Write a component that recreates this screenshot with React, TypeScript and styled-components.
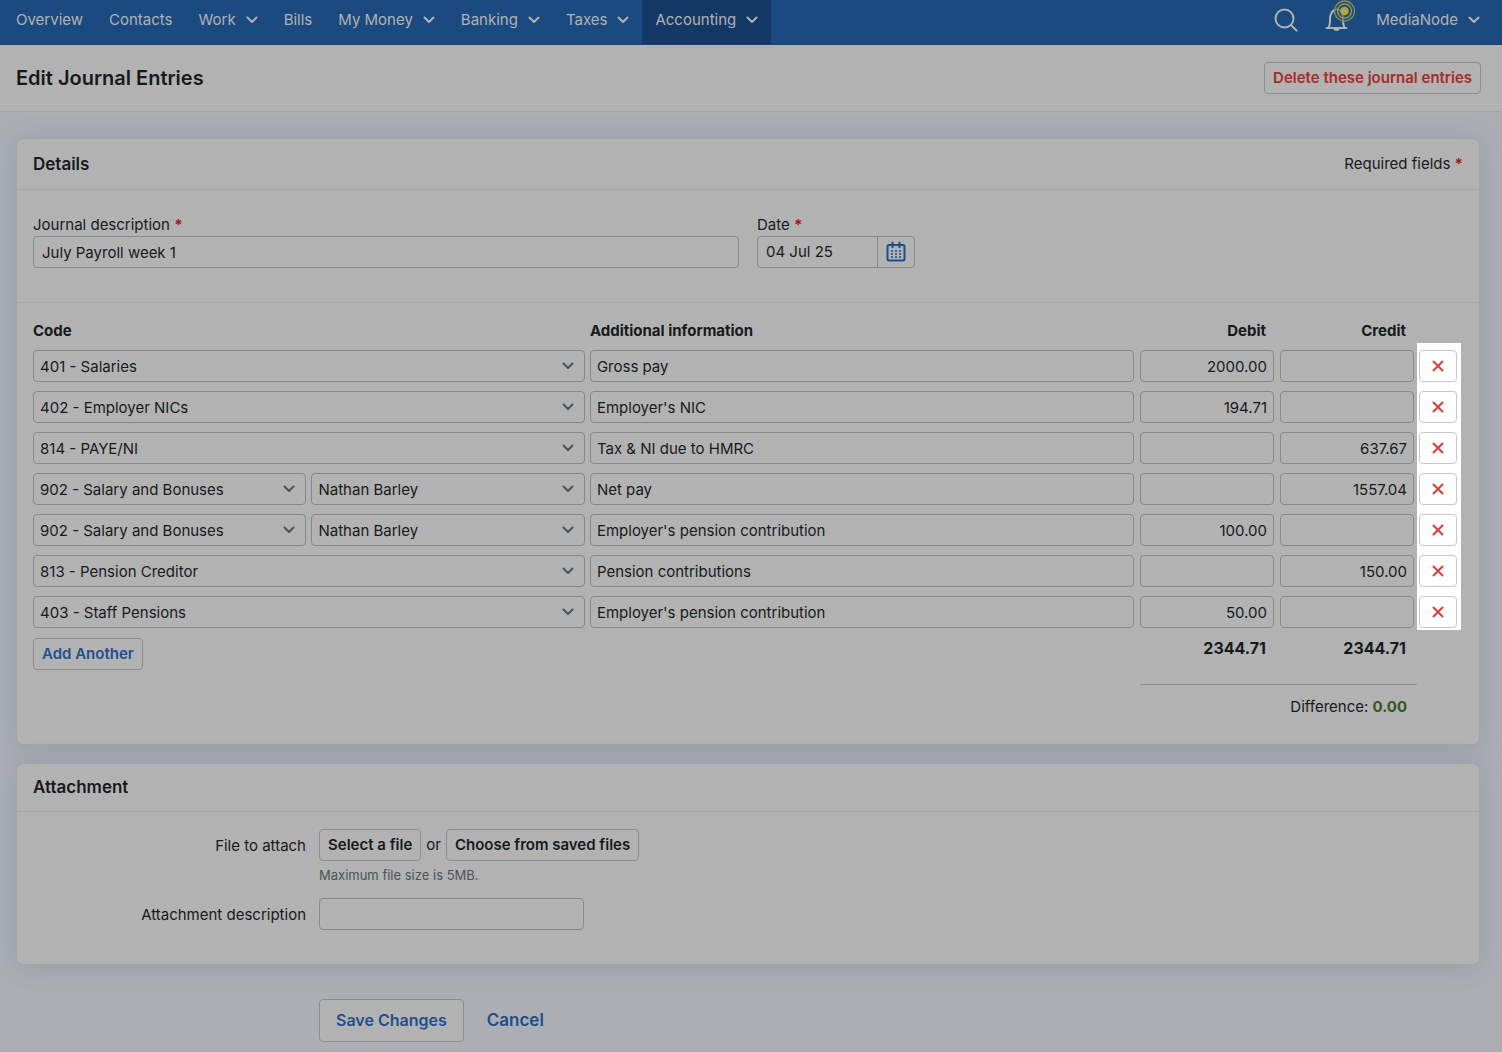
import React from 'react';
import styled, { createGlobalStyle } from 'styled-components';

const c = {
  nav: '#1b4a81',
  navActive: '#143966',
  navText: '#b2b2b2',
  page: '#abaeb3',
  card: '#b2b2b2',
  line: '#a5a6a8',
  field: '#85898d',
  button: '#898e93',
  text: '#171a1c',
  muted: '#4b5459',
  blue: '#1f4f8c',
  red: '#a72b29',
  required: '#9a1c1c',
  bright: '#dc3d35',
  green: '#31591f',
};

const GlobalStyle = createGlobalStyle`
  *, *::before, *::after { box-sizing: border-box; }
  body {
    margin: 0;
    background: ${c.page};
    color: ${c.text};
    font: 400 15px/20px Inter, "Liberation Sans", sans-serif;
  }
  button, input, select { font: inherit; color: inherit; margin: 0; }
  button { cursor: pointer; }
`;

const TopBar = styled.header`
  display: flex;
  justify-content: space-between;
  height: 45px;
  padding: 0 9px 0 3px;
  background: ${c.nav};
  border-bottom: 1px solid #1a4274;
`;

const NavGroup = styled.nav`
  display: flex;
`;

const NavLink = styled.a<{ $active?: boolean }>`
  display: flex;
  align-items: center;
  gap: 10px;
  padding: 0 13px 4px;
  color: ${c.navText};
  background: ${(p) => (p.$active ? c.navActive : 'transparent')};
  text-decoration: none;
  white-space: nowrap;
`;

const Tools = styled.div`
  display: flex;
  align-items: center;
`;

const IconButton = styled.button`
  display: flex;
  padding: 0 7px 4px 19px;
  border: 0;
  background: none;
  color: ${c.navText};
`;

const PageHead = styled.div`
  display: flex;
  align-items: center;
  justify-content: space-between;
  height: 67px;
  padding: 0 21px 0 16px;
  background: ${c.card};
  border-bottom: 1px solid #a0a2a5;
`;

const PageTitle = styled.h1`
  margin: 0;
  font-size: 20px;
  line-height: 24px;
  font-weight: 600;
`;

const Button = styled.button<{ $tone?: string; $large?: boolean }>`
  height: ${(p) => (p.$large ? 43 : 32)}px;
  padding: 0 ${(p) => (p.$large ? 16 : 8)}px;
  border: 1px solid ${c.button};
  border-radius: 4px;
  background: ${c.card};
  color: ${(p) => p.$tone || c.text};
  font-size: ${(p) => (p.$large ? 16 : 15)}px;
  font-weight: 600;
  white-space: nowrap;
`;

const Main = styled.main`
  display: flex;
  flex-direction: column;
  gap: 18px;
  padding: 26px 22px 11px 16px;
`;

const Card = styled.section`
  border: 1px solid ${c.line};
  border-radius: 8px;
  background: ${c.card};
  box-shadow: 0 2px 26px rgba(80, 92, 130, 0.22);
`;

const CardHead = styled.div<{ $compact?: boolean }>`
  display: flex;
  align-items: center;
  justify-content: space-between;
  height: ${(p) => (p.$compact ? 48 : 51)}px;
  padding: 0 16px;
  border-bottom: 1px solid ${c.line};
`;

const CardTitle = styled.h2`
  margin: 0;
  font-size: 17px;
  line-height: 24px;
  font-weight: 600;
`;

const Star = styled.span`
  color: ${c.required};
  font-weight: 700;
`;

const DetailFields = styled.div`
  display: grid;
  grid-template-columns: 1fr 1fr;
  gap: 18px;
  padding: 25px 16px 34px;
  border-bottom: 1px solid ${c.line};
`;

const Field = styled.div`
  display: flex;
  flex-direction: column;
  gap: 1px;
`;

const TextInput = styled.input<{ $right?: boolean; $roomy?: boolean }>`
  display: block;
  width: 100%;
  height: 32px;
  padding: 0 ${(p) => (p.$roomy ? 8 : 6)}px;
  border: 1px solid ${c.field};
  border-radius: 4px;
  background: transparent;
  text-align: ${(p) => (p.$right ? 'right' : 'left')};
`;

const DateGroup = styled.div`
  display: flex;
  width: 158px;
  height: 32px;
  border: 1px solid ${c.field};
  border-radius: 4px;
`;

const DateInput = styled.input`
  flex: 1;
  min-width: 0;
  padding: 0 8px;
  border: 0;
  background: none;
`;

const DateButton = styled.button`
  display: flex;
  align-items: center;
  justify-content: center;
  width: 37px;
  padding: 0;
  border: 0;
  border-left: 1px solid ${c.field};
  background: none;
  color: ${c.blue};
`;

const TableWrap = styled.div`
  padding: 0 18px 27px 16px;
`;

const Table = styled.table`
  width: 100%;
  table-layout: fixed;
  border-collapse: collapse;
`;

const Col = styled.col<{ $width?: string }>`
  width: ${(p) => p.$width || 'auto'};
`;

const Th = styled.th<{ $edge?: number }>`
  padding: 18px ${(p) => p.$edge ?? 5}px 2px 0;
  font-weight: 700;
  text-align: ${(p) => (p.$edge ? 'right' : 'left')};
`;

const Td = styled.td<{ $gap?: number }>`
  padding: 7px ${(p) => p.$gap ?? 6}px 2px 0;
`;

const RemoveCell = styled.td`
  padding: 7px 4px 2px 2px;
  background: #ffffff;
`;

const RemoveButton = styled.button`
  display: flex;
  align-items: center;
  justify-content: center;
  width: 38px;
  height: 32px;
  padding: 0;
  border: 1px solid #c1c8cf;
  border-radius: 4px;
  background: #ffffff;
  color: ${c.bright};
`;

const CodeCell = styled.div`
  display: flex;
  gap: 5px;
`;

const SelectBox = styled.div`
  display: grid;
  flex: 1;
  align-items: center;
  > * { grid-area: 1 / 1; }
  > svg { justify-self: end; margin-right: 11px; pointer-events: none; color: ${c.muted}; }
`;

const Select = styled.select`
  appearance: none;
  width: 100%;
  height: 32px;
  padding: 2px 30px 0 6px;
  border: 1px solid ${c.field};
  border-radius: 4px;
  background: transparent;
`;

const FootCell = styled.td`
  padding: 8px 0 14px;
  vertical-align: top;
`;

const Total = styled.td<{ $edge?: number }>`
  padding: 8px ${(p) => p.$edge ?? 14}px 0 0;
  font-size: 16px;
  font-weight: 700;
  text-align: right;
  vertical-align: top;
`;

const Difference = styled.td`
  padding: 12px 10px 0 0;
  border-top: 1px solid #8d8f91;
  text-align: right;
`;

const Balance = styled.strong`
  color: ${c.green};
  font-weight: 700;
`;

const AttachForm = styled.div`
  display: grid;
  grid-template-columns: 273px 1fr;
  column-gap: 13px;
  padding: 17px 16px 34px;
`;

const SideLabel = styled.label`
  padding-top: 7px;
  text-align: right;
`;

const FileRow = styled.div`
  display: flex;
  align-items: center;
  gap: 5px;
`;

const Hint = styled.p`
  margin: 0;
  padding: 4px 0 13px;
  color: ${c.muted};
  font-size: 13px;
`;

const ShortInput = styled(TextInput)`
  width: 265px;
`;

const Actions = styled.div`
  display: flex;
  align-items: center;
  gap: 23px;
  padding: 16px 0 0 303px;
`;

const CancelLink = styled.a`
  color: ${c.blue};
  font-size: 17px;
  font-weight: 600;
  text-decoration: none;
`;

const Chevron = () => (
  <svg width="12" height="8" viewBox="0 0 12 8" fill="none" stroke="currentColor" strokeWidth="2" strokeLinecap="round" strokeLinejoin="round" aria-hidden="true">
    <path d="M1.500 1.500 6 6l4.500-4.500" />
  </svg>
);

const SearchIcon = () => (
  <svg width="24" height="24" viewBox="0 0 24 24" fill="none" stroke="currentColor" strokeWidth="2" strokeLinecap="round" aria-hidden="true">
    <circle cx="10.500" cy="10.500" r="9" />
    <path d="m17 17 5.500 5.500" />
  </svg>
);

const BellIcon = () => (
  <svg width="32" height="40" viewBox="2 1 32 40" fill="none" aria-hidden="true">
    <path d="M4.500 29h20M6.500 28.500c1.200-2 1.500-4 1.500-8.500 0-5 2.500-9.500 7-9.500 4 0 6 4.500 6 9.500 0 4.500.3 6.500 1.500 8.500" stroke="currentColor" strokeWidth="2" strokeLinecap="round" />
    <path d="M11.500 29.500a3 2.500 0 0 0 6 0z" fill="currentColor" />
    <circle cx="22.500" cy="12" r="10" fill={c.nav} fillOpacity="0.500" />
    <circle cx="22.500" cy="12" r="4.300" fill="#b1a631" />
    <circle cx="22.500" cy="12" r="7" stroke="#9a9a43" strokeWidth="1.300" />
    <circle cx="22.500" cy="12" r="10" stroke="#86903f" strokeWidth="1.300" />
  </svg>
);

const CalendarIcon = () => (
  <svg width="20" height="20" viewBox="0 0 20 20" fill="none" stroke="currentColor" strokeWidth="2" aria-hidden="true">
    <rect x="1.500" y="3" width="17" height="15.500" rx="1.500" />
    <path d="M6.500 0v6M13.500 0v6" />
    <path d="M5 9h2m2 0h2m2 0h2M5 12h2m2 0h2m2 0h2M5 15h2m2 0h2m2 0h2" strokeWidth="1.600" />
  </svg>
);

const CrossIcon = () => (
  <svg width="12" height="12" viewBox="0 0 12 12" stroke="currentColor" strokeWidth="2" strokeLinecap="round" aria-hidden="true">
    <path d="m1.500 1.500 9 9M10.500 1.500l-9 9" />
  </svg>
);

const navItems = [
  { label: 'Overview' },
  { label: 'Contacts' },
  { label: 'Work', menu: true },
  { label: 'Bills' },
  { label: 'My Money', menu: true },
  { label: 'Banking', menu: true },
  { label: 'Taxes', menu: true },
  { label: 'Accounting', menu: true, active: true },
];

const entries = [
  { code: '401 - Salaries', info: 'Gross pay', debit: '2000.00', credit: '' },
  { code: '402 - Employer NICs', info: "Employer's NIC", debit: '194.71', credit: '' },
  { code: '814 - PAYE/NI', info: 'Tax & NI due to HMRC', debit: '', credit: '637.67' },
  { code: '902 - Salary and Bonuses', person: 'Nathan Barley', info: 'Net pay', debit: '', credit: '1557.04' },
  { code: '902 - Salary and Bonuses', person: 'Nathan Barley', info: "Employer's pension contribution", debit: '100.00', credit: '' },
  { code: '813 - Pension Creditor', info: 'Pension contributions', debit: '', credit: '150.00' },
  { code: '403 - Staff Pensions', info: "Employer's pension contribution", debit: '50.00', credit: '' },
];

function SelectField({ value, label }: { value: string; label: string }) {
  return (
    <SelectBox>
      <Select aria-label={label} defaultValue={value}>
        <option>{value}</option>
      </Select>
      <Chevron />
    </SelectBox>
  );
}

export default function App() {
  return (
    <>
      <GlobalStyle />
      <TopBar>
        <NavGroup>
          {navItems.map((item) => (
            <NavLink key={item.label} href="#" $active={item.active}>
              {item.label}
              {item.menu && <Chevron />}
            </NavLink>
          ))}
        </NavGroup>
        <Tools>
          <IconButton aria-label="Search"><SearchIcon /></IconButton>
          <IconButton aria-label="Notifications"><BellIcon /></IconButton>
          <NavLink href="#">MediaNode<Chevron /></NavLink>
        </Tools>
      </TopBar>
      <PageHead>
        <PageTitle>Edit Journal Entries</PageTitle>
        <Button $tone={c.red}>Delete these journal entries</Button>
      </PageHead>
      <Main>
        <Card>
          <CardHead>
            <CardTitle>Details</CardTitle>
            <span>Required fields <Star>*</Star></span>
          </CardHead>
          <DetailFields>
            <Field>
              <label htmlFor="description">Journal description <Star>*</Star></label>
              <TextInput id="description" $roomy defaultValue="July Payroll week 1" />
            </Field>
            <Field>
              <label htmlFor="date">Date <Star>*</Star></label>
              <DateGroup>
                <DateInput id="date" defaultValue="04 Jul 25" />
                <DateButton aria-label="Choose date"><CalendarIcon /></DateButton>
              </DateGroup>
            </Field>
          </DetailFields>
          <TableWrap>
            <Table>
              <colgroup>
                <Col $width="39%" />
                <Col />
                <Col $width="140px" />
                <Col $width="137px" />
                <Col $width="44px" />
              </colgroup>
              <thead>
                <tr>
                  <Th>Code</Th>
                  <Th>Additional information</Th>
                  <Th $edge={14}>Debit</Th>
                  <Th $edge={11}>Credit</Th>
                  <Th />
                </tr>
              </thead>
              <tbody>
                {entries.map((entry, i) => (
                  <tr key={i}>
                    <Td $gap={5}>
                      <CodeCell>
                        <SelectField label="Code" value={entry.code} />
                        {entry.person && <SelectField label="Employee" value={entry.person} />}
                      </CodeCell>
                    </Td>
                    <Td><TextInput aria-label="Additional information" defaultValue={entry.info} /></Td>
                    <Td><TextInput aria-label="Debit" $right defaultValue={entry.debit} /></Td>
                    <Td $gap={3}><TextInput aria-label="Credit" $right defaultValue={entry.credit} /></Td>
                    <RemoveCell><RemoveButton aria-label="Remove entry"><CrossIcon /></RemoveButton></RemoveCell>
                  </tr>
                ))}
              </tbody>
              <tfoot>
                <tr>
                  <FootCell colSpan={2}><Button $tone={c.blue}>Add Another</Button></FootCell>
                  <Total>2344.71</Total>
                  <Total $edge={11}>2344.71</Total>
                  <td />
                </tr>
                <tr>
                  <td colSpan={2} />
                  <Difference colSpan={2}>Difference: <Balance>0.00</Balance></Difference>
                  <td />
                </tr>
              </tfoot>
            </Table>
          </TableWrap>
        </Card>
        <Card>
          <CardHead $compact>
            <CardTitle>Attachment</CardTitle>
          </CardHead>
          <AttachForm>
            <SideLabel htmlFor="select-file">File to attach</SideLabel>
            <div>
              <FileRow>
                <Button id="select-file">Select a file</Button>
                or
                <Button>Choose from saved files</Button>
              </FileRow>
              <Hint>Maximum file size is 5MB.</Hint>
            </div>
            <SideLabel htmlFor="attachment-description">Attachment description</SideLabel>
            <ShortInput id="attachment-description" />
          </AttachForm>
        </Card>
        <Actions>
          <Button $large $tone={c.blue}>Save Changes</Button>
          <CancelLink href="#">Cancel</CancelLink>
        </Actions>
      </Main>
    </>
  );
}
